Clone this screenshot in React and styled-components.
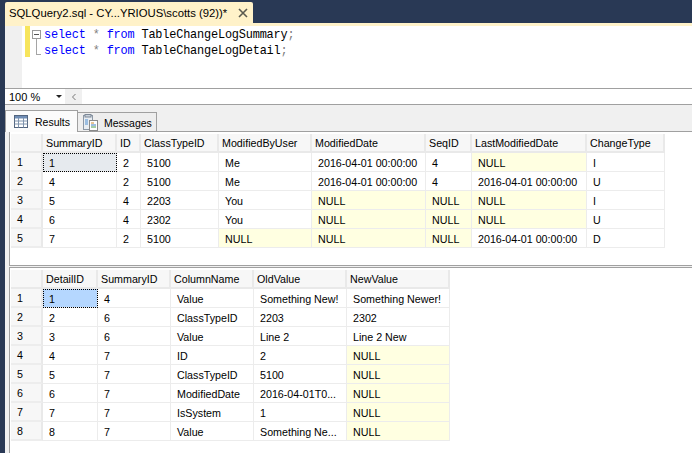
import React from "react";
import styled, { createGlobalStyle } from "styled-components";

const GlobalStyle = createGlobalStyle`
  html, body { margin: 0; padding: 0; background: #293955; }
  body { font-family: "Liberation Sans", Arial, sans-serif; font-size: 11px; color: #000; }
`;

const Page = styled.div`
  width: 692px;
  height: 453px;
  padding: 2px 0 0 5px;
  box-sizing: border-box;
  display: flex;
  flex-direction: column;
  overflow: hidden;
`;

const DocTab = styled.div`
  width: 248px;
  height: 21px;
  background: #fff2c9;
  border-radius: 2px 2px 0 0;
  display: flex;
  align-items: center;
  justify-content: space-between;
  padding: 0 5px 0 4px;
  box-sizing: border-box;
  font-size: 11.3px;
  color: #000;
  white-space: nowrap;
`;

const YellowStrip = styled.div`
  height: 3px;
  background: #fff2c9;
`;

const Editor = styled.div`
  height: 63px;
  display: flex;
  background: #fff;
  border-bottom: 1px solid #a0a0a0;
  box-sizing: border-box;
`;

const Gutter = styled.div`
  width: 17px;
  background: #f0f0f0;
`;

const ChangeBar = styled.div`
  width: 5px;
  height: 31px;
  margin-left: 3px;
  background: #f7e55c;
`;

const FoldColumn = styled.div`
  width: 9px;
  height: 31px;
  margin: 0 0 0 2px;
  position: relative;
`;

const FoldBox = styled.div`
  position: absolute;
  top: 4px;
  left: 0;
  width: 7px;
  height: 7px;
  border: 1px solid #9a9a9a;
  box-sizing: content-box;
  &::before {
    content: "";
    position: absolute;
    left: 1px;
    right: 1px;
    top: 3px;
    height: 1px;
    background: #555;
  }
`;

const FoldLine = styled.div`
  position: absolute;
  left: 4px;
  top: 13px;
  bottom: 2px;
  width: 5px;
  border-left: 1px solid #a5a5a5;
  border-bottom: 1px solid #a5a5a5;
  box-sizing: border-box;
`;

const Code = styled.div`
  padding: 1px 0 0 3px;
  font-family: "Liberation Mono", monospace;
  font-size: 11.9px;
  letter-spacing: -0.18px;
  line-height: 16px;
  color: #000;
  white-space: pre;
`;

const Keyword = styled.span`
  color: #0000ff;
`;

const Operator = styled.span`
  color: #808080;
`;

const ZoomRow = styled.div`
  height: 16px;
  display: flex;
  background: #f0f0f0;
  border-bottom: 1px solid #a0a0a0;
  box-sizing: border-box;
`;

const ZoomSelect = styled.div`
  width: 60px;
  background: #fff;
  display: flex;
  align-items: center;
  justify-content: space-between;
  padding: 0 3px 0 4px;
  box-sizing: border-box;
  font-size: 11px;
  &::after {
    content: "";
    border-left: 3px solid transparent;
    border-right: 3px solid transparent;
    border-top: 3px solid #222;
  }
`;

const ScrollLeft = styled.div`
  width: 15px;
  margin-left: 1px;
  background: #f0f0f0;
  display: flex;
  align-items: center;
  justify-content: center;
`;

const ScrollTrack = styled.div`
  flex: 1;
  background: #fff;
  margin-left: 1px;
`;

const TabBar = styled.div`
  height: 27px;
  padding: 6px 0 0 0;
  box-sizing: border-box;
  display: flex;
  align-items: flex-end;
  background: #f0f0f0;
  border-bottom: 1px solid #a0a0a0;
`;

const ResultTab = styled.div`
  display: flex;
  align-items: center;
  box-sizing: border-box;
  background: ${(p) => (p.$active ? "#fbfbfb" : "#eeeeee")};
  border: 1px solid #a0a0a0;
  border-bottom: ${(p) => (p.$active ? "0" : "1px solid #a0a0a0")};
  height: ${(p) => (p.$active ? "22px" : "20px")};
  width: ${(p) => (p.$active ? "73px" : "80px")};
  margin-bottom: ${(p) => (p.$active ? "-1px" : "-1px")};
  margin-left: ${(p) => (p.$active ? "0" : "-1px")};
  padding-left: ${(p) => (p.$active ? "8px" : "5px")};
  padding-top: ${(p) => (p.$active ? "0" : "1px")};
  gap: ${(p) => (p.$active ? "7px" : "6px")};
  font-size: 10.5px;
  color: #000;
`;

const Results = styled.div`
  flex: 1;
  display: flex;
  flex-direction: column;
  background: #f0f0f0;
  padding-left: 4px;
  min-height: 0;
`;

const Pane = styled.div`
  height: ${(p) => p.$height}px;
  background: #fff;
  padding: 2px 0 0 1px;
  box-sizing: border-box;
  border-left: 1px solid #a0a0a0;
  overflow: hidden;
`;

const Splitter = styled.div`
  height: 3px;
  background: #f0f0f0;
  border-top: 1px solid #a0a0a0;
  border-bottom: 1px solid #a0a0a0;
  box-sizing: border-box;
`;

const Grid = styled.div`
  display: grid;
  grid-template-columns: ${(p) => p.$columns};
  grid-auto-rows: 19px;
  width: max-content;
  background: #fff;
`;

const HeaderCell = styled.div`
  background: #f7f7f7;
  border-right: 2px solid #e9e9e9;
  border-bottom: 2px solid #e9e9e9;
  padding: 1px 0 0 3px;
  box-sizing: border-box;
  display: flex;
  align-items: center;
  font-size: 10.7px;
  white-space: nowrap;
  overflow: hidden;
`;

const RowHeader = styled(HeaderCell)`
  padding-left: 6px;
  border-bottom-color: #ededed;
`;

const Cell = styled.div`
  background: ${(p) => (p.$selected === "active" ? "#b5d7ff" : p.$selected === "inactive" ? "#e6eaee" : p.$isNull ? "#ffffe1" : "#fff")};
  border-right: 1px solid #ececec;
  border-bottom: 1px solid #ececec;
  outline: ${(p) => (p.$selected ? "1px dotted #000" : "none")};
  outline-offset: -1px;
  padding: 1px 0 0 6px;
  box-sizing: border-box;
  display: flex;
  align-items: center;
  font-size: 10.7px;
  white-space: nowrap;
  overflow: hidden;
`;

const summary = {
  columns: "32px 74px 24px 78px 93px 114px 46px 115px 78px",
  head: ["", "SummaryID", "ID", "ClassTypeID", "ModifiedByUser", "ModifiedDate", "SeqID", "LastModifiedDate", "ChangeType"],
  rows: [
    ["1", "2", "5100", "Me", "2016-04-01 00:00:00", "4", "NULL", "I"],
    ["4", "2", "5100", "Me", "2016-04-01 00:00:00", "4", "2016-04-01 00:00:00", "U"],
    ["5", "4", "2203", "You", "NULL", "NULL", "NULL", "I"],
    ["6", "4", "2302", "You", "NULL", "NULL", "NULL", "U"],
    ["7", "2", "5100", "NULL", "NULL", "NULL", "2016-04-01 00:00:00", "D"],
  ],
};

const detail = {
  columns: "32px 55px 73px 83px 93px 103px",
  head: ["", "DetailID", "SummaryID", "ColumnName", "OldValue", "NewValue"],
  rows: [
    ["1", "4", "Value", "Something New!", "Something Newer!"],
    ["2", "6", "ClassTypeID", "2203", "2302"],
    ["3", "6", "Value", "Line 2", "Line 2 New"],
    ["4", "7", "ID", "2", "NULL"],
    ["5", "7", "ClassTypeID", "5100", "NULL"],
    ["6", "7", "ModifiedDate", "2016-04-01T0...", "NULL"],
    ["7", "7", "IsSystem", "1", "NULL"],
    ["8", "7", "Value", "Something Ne...", "NULL"],
  ],
};

function DataGrid({ data, selected }) {
  return (
    <Grid $columns={data.columns}>
      {data.head.map((title, i) => (
        <HeaderCell key={i}>{title}</HeaderCell>
      ))}
      {data.rows.map((row, r) => (
        <React.Fragment key={r}>
          <RowHeader>{r + 1}</RowHeader>
          {row.map((value, c) => (
            <Cell
              key={c}
              $isNull={value === "NULL"}
              $selected={r === 0 && c === 0 ? selected : undefined}
            >
              {value}
            </Cell>
          ))}
        </React.Fragment>
      ))}
    </Grid>
  );
}

function CloseIcon() {
  return (
    <svg width="10" height="10" viewBox="0 0 10 10">
      <path d="M1 1 L9 9 M9 1 L1 9" stroke="#5a5a50" strokeWidth="1.6" fill="none" />
    </svg>
  );
}

function GridIcon() {
  return (
    <svg width="14" height="13" viewBox="0 0 14 13">
      <rect x="0.5" y="0.5" width="13" height="12" fill="#fff" stroke="#53657f" />
      <rect x="1" y="1" width="12" height="2.5" fill="#6f8db5" />
      <path d="M0.5 6 H13.5 M0.5 9 H13.5 M4.5 3 V12.5 M9.5 3 V12.5" stroke="#7f93ad" fill="none" />
    </svg>
  );
}

function MessagesIcon() {
  return (
    <svg width="15" height="17" viewBox="0 0 15 17">
      <rect x="0.5" y="1.5" width="9" height="14" fill="#e8edf2" stroke="#8c98a6" />
      <rect x="2" y="0.5" width="6" height="2.5" fill="#c9d2dc" stroke="#7d8896" />
      <rect x="6.5" y="6.5" width="8" height="10" fill="#fff" stroke="#8a8a8a" />
      <path d="M8 9 H11" stroke="#d08a2a" fill="none" />
      <path d="M8 11 H13" stroke="#3d7fc4" fill="none" />
      <path d="M8 13 H13" stroke="#4a9a4a" fill="none" />
      <path d="M2 6 H5 M2 8 H5 M2 10 H5" stroke="#4f8fd0" fill="none" />
    </svg>
  );
}

export default function App() {
  return (
    <Page>
      <GlobalStyle />
      <DocTab>
        <span>SQLQuery2.sql - CY...YRIOUS\scotts (92))*</span>
        <CloseIcon />
      </DocTab>
      <YellowStrip />
      <Editor>
        <Gutter />
        <ChangeBar />
        <FoldColumn>
          <FoldBox />
          <FoldLine />
        </FoldColumn>
        <Code>
          <Keyword>select</Keyword> <Operator>*</Operator> <Keyword>from</Keyword> TableChangeLogSummary<Operator>;</Operator>
          {"\n"}
          <Keyword>select</Keyword> <Operator>*</Operator> <Keyword>from</Keyword> TableChangeLogDetail<Operator>;</Operator>
        </Code>
      </Editor>
      <ZoomRow>
        <ZoomSelect>100 %</ZoomSelect>
        <ScrollLeft>
          <svg width="6" height="8" viewBox="0 0 6 8">
            <path d="M4.5 1 L1.5 4 L4.5 7" stroke="#777" fill="none" />
          </svg>
        </ScrollLeft>
        <ScrollTrack />
      </ZoomRow>
      <TabBar>
        <ResultTab $active>
          <GridIcon />
          Results
        </ResultTab>
        <ResultTab>
          <MessagesIcon />
          Messages
        </ResultTab>
      </TabBar>
      <Results>
        <Pane $height={133}>
          <DataGrid data={summary} selected="inactive" />
        </Pane>
        <Splitter />
        <Pane $height={185}>
          <DataGrid data={detail} selected="active" />
        </Pane>
      </Results>
    </Page>
  );
}
